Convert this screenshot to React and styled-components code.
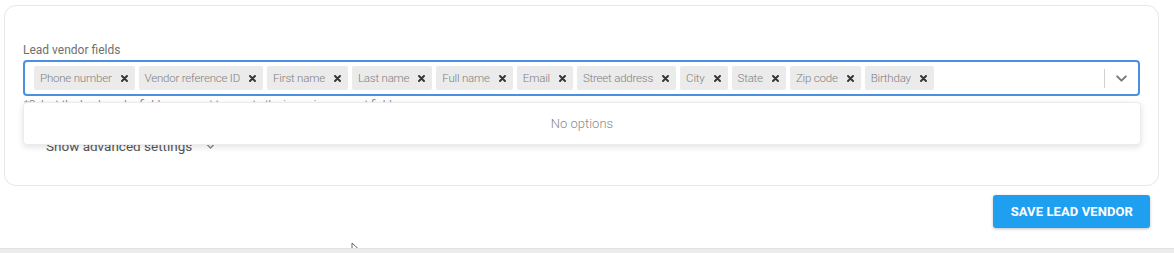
import React from 'react'
import styled, { createGlobalStyle } from 'styled-components'

const Global = createGlobalStyle`
  body {
    margin: 0;
    background: #fff;
    font-family: Roboto, 'Liberation Sans', sans-serif;
  }
`

const Page = styled.div`
  position: relative;
  width: 1174px;
  height: 253px;
  overflow: hidden;
  padding-top: 5px;
  box-sizing: border-box;
`

const Card = styled.div`
  margin-left: 4px;
  width: 1155px;
  height: 181px;
  box-sizing: border-box;
  border: 1px solid #e6e6e6;
  border-radius: 12px;
  padding: 36px 18px 0 18px;
`

const Label = styled.div`
  font-size: 12px;
  line-height: 17px;
  color: #6f6f6f;
  margin-bottom: 1px;
`

const Field = styled.div`
  position: relative;
`

const SelectBox = styled.div`
  display: flex;
  align-items: center;
  height: 36px;
  box-sizing: border-box;
  border: 2px solid #4a8fe0;
  border-radius: 4px;
  padding: 0 0 0 9px;
`

const Chips = styled.div`
  flex: 1;
  display: flex;
  gap: 4px;
`

const Chip = styled.div`
  display: flex;
  align-items: center;
  height: 24px;
  padding: 0 7px 0 6px;
  background: #ebebeb;
  border-radius: 2px;
  font-size: 11.5px;
  font-weight: 300;
  color: #7f7f7f;
  white-space: nowrap;
  letter-spacing: -0.2px;
`

const Remove = styled.span`
  margin-left: 9px;
  display: flex;
`

const Indicators = styled.div`
  display: flex;
  align-items: center;
  height: 100%;
`

const Separator = styled.div`
  width: 1px;
  height: 19px;
  background: #d0d0d0;
`

const Arrow = styled.div`
  width: 33px;
  display: flex;
  justify-content: center;
`

const Helper = styled.div`
  font-size: 11px;
  line-height: 14px;
  color: #8a8a8a;
  margin-top: 2px;
  padding-left: 1px;
`

const Menu = styled.div`
  position: absolute;
  left: 0;
  right: -1px;
  top: 42px;
  height: 41px;
  background: #fff;
  border: 1px solid #ececec;
  border-radius: 4px;
  box-shadow: 0 2px 6px rgba(0, 0, 0, 0.12);
  display: flex;
  align-items: center;
  justify-content: center;
  font-size: 13px;
  font-weight: 300;
  color: #8a8a8a;
  z-index: 2;
`

const Advanced = styled.div`
  display: flex;
  align-items: center;
  gap: 14px;
  margin-top: 26px;
  padding-left: 23px;
  font-size: 13.5px;
  color: #555;
`

const Footer = styled.div`
  display: flex;
  justify-content: flex-end;
  padding: 9px 24px 0 0;
`

const SaveButton = styled.button`
  height: 33px;
  padding: 0 17px 0 18px;
  border: none;
  border-radius: 3px;
  background: #1f9ff0;
  color: #fff;
  font-family: Roboto, 'Liberation Sans', sans-serif;
  font-weight: 700;
  font-size: 13px;
  letter-spacing: 0.1px;
  box-shadow: 0 1px 3px rgba(0, 0, 0, 0.25);
`

const Strip = styled.div`
  position: absolute;
  left: 0;
  right: 0;
  bottom: 0;
  height: 4px;
  background: #ececec;
  border-top: 1px solid #e2e2e2;
`

const Cursor = styled.svg`
  position: absolute;
  left: 351px;
  top: 242px;
`

const fields = [
  'Phone number',
  'Vendor reference ID',
  'First name',
  'Last name',
  'Full name',
  'Email',
  'Street address',
  'City',
  'State',
  'Zip code',
  'Birthday'
]

const XIcon = () => (
  <svg width='7' height='7' viewBox='0 0 7 7'>
    <path d='M1 1 L6 6 M6 1 L1 6' stroke='#333' strokeWidth='1.9' strokeLinecap='round' />
  </svg>
)

const Chevron = ({ size = 12, color = '#777' }) => (
  <svg width={size} height={size} viewBox='0 0 12 12'>
    <path d='M2 4 L6 8 L10 4' fill='none' stroke={color} strokeWidth='1.8' strokeLinecap='round' strokeLinejoin='round' />
  </svg>
)

export default function App() {
  return (
    <Page>
      <Global />
      <Card>
        <Label>Lead vendor fields</Label>
        <Field>
          <SelectBox>
            <Chips>
              {fields.map((f) => (
                <Chip key={f}>
                  {f}
                  <Remove>
                    <XIcon />
                  </Remove>
                </Chip>
              ))}
            </Chips>
            <Indicators>
              <Separator />
              <Arrow>
                <Chevron size={13} color='#777' />
              </Arrow>
            </Indicators>
          </SelectBox>
          <Menu>No options</Menu>
          <Helper>*Select the lead vendor fields you want to map to the incoming request fields</Helper>
        </Field>
        <Advanced>
          Show advanced settings
          <Chevron size={9} color='#888' />
        </Advanced>
      </Card>
      <Footer>
        <SaveButton>SAVE LEAD VENDOR</SaveButton>
      </Footer>
      <Cursor width='10' height='12' viewBox='0 0 10 12'>
        <path d='M1 1 L1 10 L3.5 8 L5.5 11.5 L7 10.8 L5 7.5 L8 7.5 Z' fill='#fff' stroke='#555' strokeWidth='0.9' />
      </Cursor>
      <Strip />
    </Page>
  )
}
